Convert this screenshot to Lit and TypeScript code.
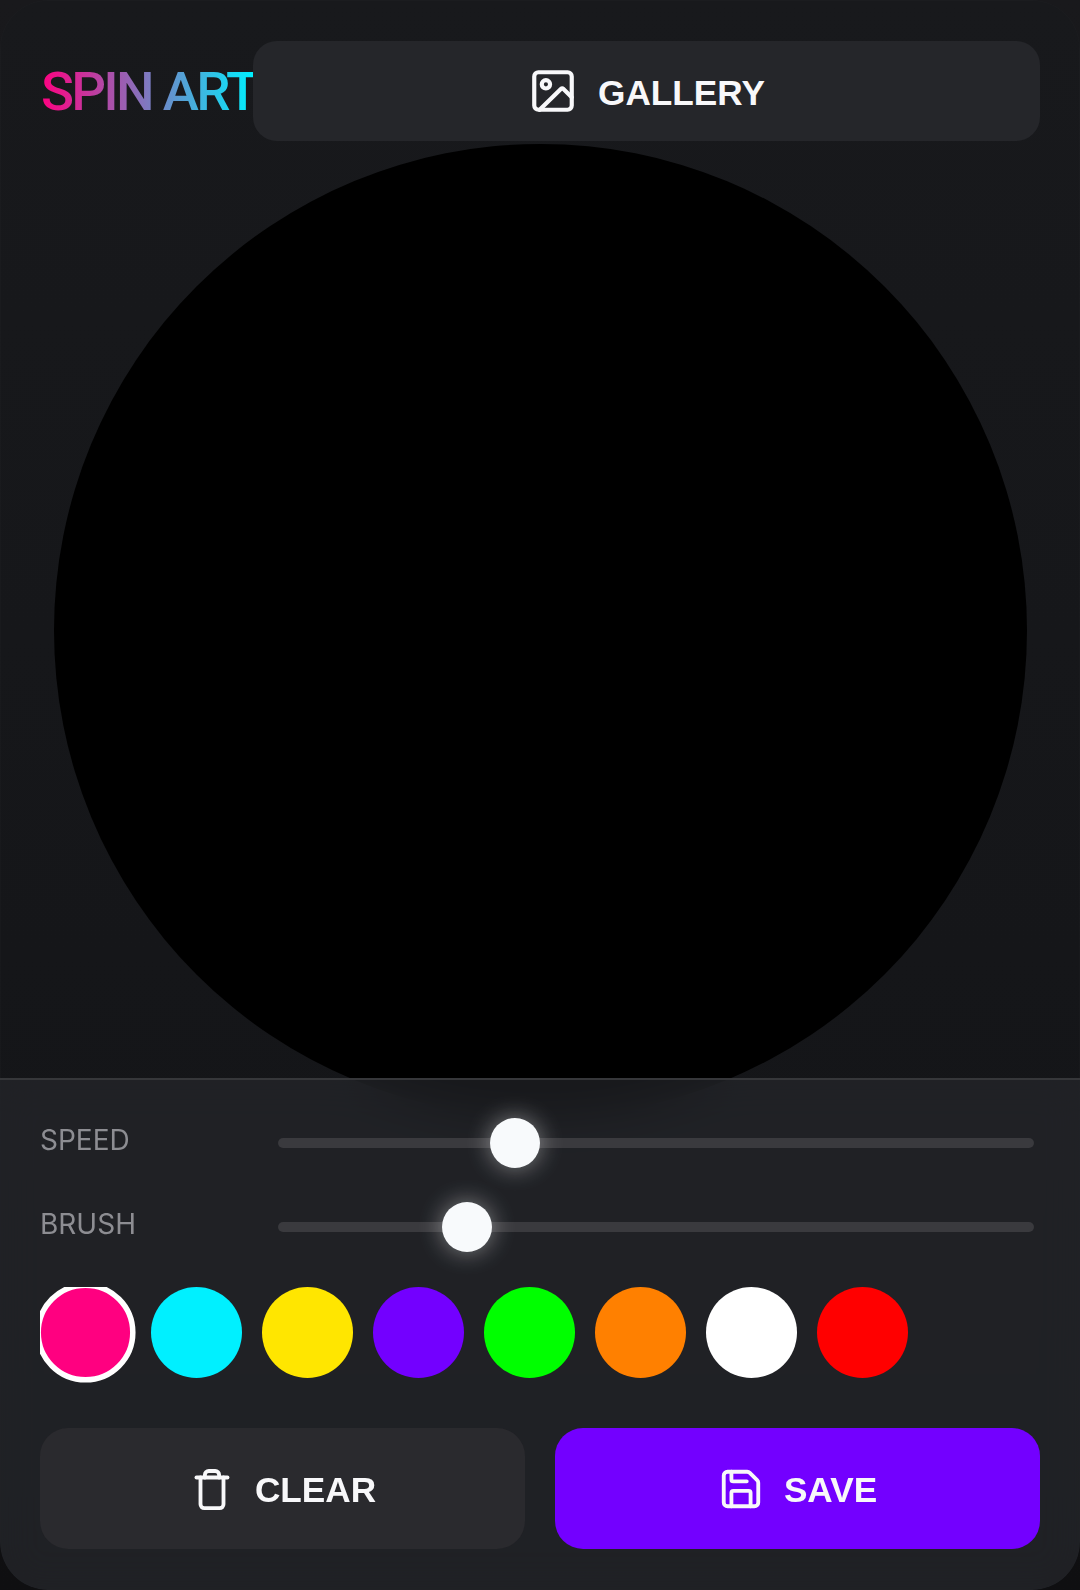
import { LitElement, html, css } from "lit";
import { customElement } from "lit/decorators.js";

const COLORS = ["#ff0080", "#00f0ff", "#ffe600", "#7300ff", "#00ff00", "#ff8000", "#ffffff", "#ff0000"];

@customElement("app-root")
export class AppRoot extends LitElement {
  static styles = css`
    :host { display: block; width: 1080px; height: 1590px; background: linear-gradient(180deg, #19191c 0%, #0f0f11 100%); font-family: "Liberation Sans", Arial, sans-serif; }
    .shell {
      width: 1080px; height: 1590px; box-sizing: border-box; border-radius: 48px; overflow: hidden;
      display: flex; flex-direction: column;
      background: linear-gradient(180deg, #18191c 0%, #131417 100%);
      box-shadow: inset 0 0 0 1px rgba(255,255,255,0.015);
    }
    header { display: flex; align-items: center; padding: 41px 40px 0; height: 100px; flex: none; }
    h1 {
      margin: 0; flex: none; width: 213px; white-space: nowrap;
      font: 500 54.5px/1 Roboto, sans-serif; letter-spacing: -0.05em; padding-left: 1px; box-sizing: border-box;
      background: linear-gradient(90deg, #ff0080, #00f0ff);
      -webkit-background-clip: text; background-clip: text; color: transparent;
    }
    button {
      border: 0; color: #f8f8fa; font: 700 35.2px/1 "Liberation Sans", Arial, sans-serif;
      display: flex; align-items: center; justify-content: center; gap: 20px; padding: 0;
    }
    .t { padding-top: 3px; }
    svg { fill: none; stroke: currentColor; stroke-width: 2; stroke-linecap: round; stroke-linejoin: round; flex: none; }
    .gallery { flex: 1; height: 100px; border-radius: 24px; background: #25262a; }
    .stage { flex: 1; min-height: 0; display: flex; justify-content: center; align-items: flex-start; padding-top: 3px; }
    .disc { width: 973px; height: 973px; flex: none; border-radius: 50%; background: #000; }
    .panel {
      position: relative; flex: none; padding: 38px 40px 41px;
      border-top: 2px solid #36373a;
      background: rgba(40,41,46,0.6);
      backdrop-filter: blur(20px);
      display: flex; flex-direction: column;
    }
    .row { display: flex; align-items: center; height: 50px; margin-bottom: 34px; }
    .row label { width: 238px; flex: none; box-sizing: border-box; padding-bottom: 6px; font: 400 28px/1 Inter, sans-serif; color: #8d8d92; }
    input[type="range"] {
      -webkit-appearance: none; appearance: none; margin: 0 6px 0 0; flex: 1; height: 50px; background: transparent; display: block;
    }
    input[type="range"]::-webkit-slider-runnable-track { height: 10px; border-radius: 5px; background: #3a3a3e; }
    input[type="range"]::-webkit-slider-thumb {
      -webkit-appearance: none; width: 50px; height: 50px; margin-top: -20px; border-radius: 50%;
      background: #f8fafc; box-shadow: 0 0 24px rgba(255,255,255,0.45);
    }
    .swatches { display: flex; gap: 20px; overflow: hidden; margin-top: 1px; padding-bottom: 10px; margin-bottom: 40px; }
    .swatch { width: 91px; height: 91px; flex: none; box-sizing: border-box; border-radius: 50%; border: 5px solid transparent; }
    .swatch.on { border-color: #fff; transform: scale(1.1); }
    .actions { display: flex; gap: 30px; }
    .actions button { flex: 1; height: 121px; border-radius: 28px; }
    .clear { background: #2a2a2e; }
    .save { background: #7300ff; }
  `;

  render() {
    return html`<div class="shell">
      <header>
        <h1>SPIN ART</h1>
        <button class="gallery">
          <svg width="50" height="50" viewBox="0 0 24 24"><rect x="3" y="3" width="18" height="18" rx="2"/><circle cx="8.6" cy="8.8" r="2"/><path d="M21 15l-4.1-4.1a.7.7 0 0 0-1 0L5.6 21"/></svg>
          <span class="t">GALLERY</span>
        </button>
      </header>
      <div class="stage"><div class="disc"></div></div>
      <section class="panel">
        <div class="row"><label>SPEED</label><input type="range" min="0" max="100" step="0.1" value="30"></div>
        <div class="row"><label>BRUSH</label><input type="range" min="0" max="100" step="0.1" value="23.2"></div>
        <div class="swatches">
          ${COLORS.map((c, i) => html`<div class="swatch ${i === 0 ? "on" : ""}" style="background-color:${c}"></div>`)}
        </div>
        <div class="actions">
          <button class="clear">
            <svg width="46" height="46" viewBox="0 0 24 24"><path d="M3.9 6h16.2"/><path d="M18 6v14a2 2 0 0 1-2 2H8a2 2 0 0 1-2-2V6"/><path d="M8.3 6V4.6a2 2 0 0 1 2-2h3.4a2 2 0 0 1 2 2V6"/></svg>
            <span class="t">CLEAR</span>
          </button>
          <button class="save">
            <svg width="46" height="46" viewBox="0 0 24 24"><path d="M15.2 3a2 2 0 0 1 1.4.6l3.8 3.8a2 2 0 0 1 .6 1.4V19a2 2 0 0 1-2 2H5a2 2 0 0 1-2-2V5a2 2 0 0 1 2-2z"/><path d="M17 21v-7a1 1 0 0 0-1-1H8a1 1 0 0 0-1 1v7"/><path d="M7 3v4a1 1 0 0 0 1 1h7"/></svg>
            <span class="t">SAVE</span>
          </button>
        </div>
      </section>
    </div>`;
  }
}
